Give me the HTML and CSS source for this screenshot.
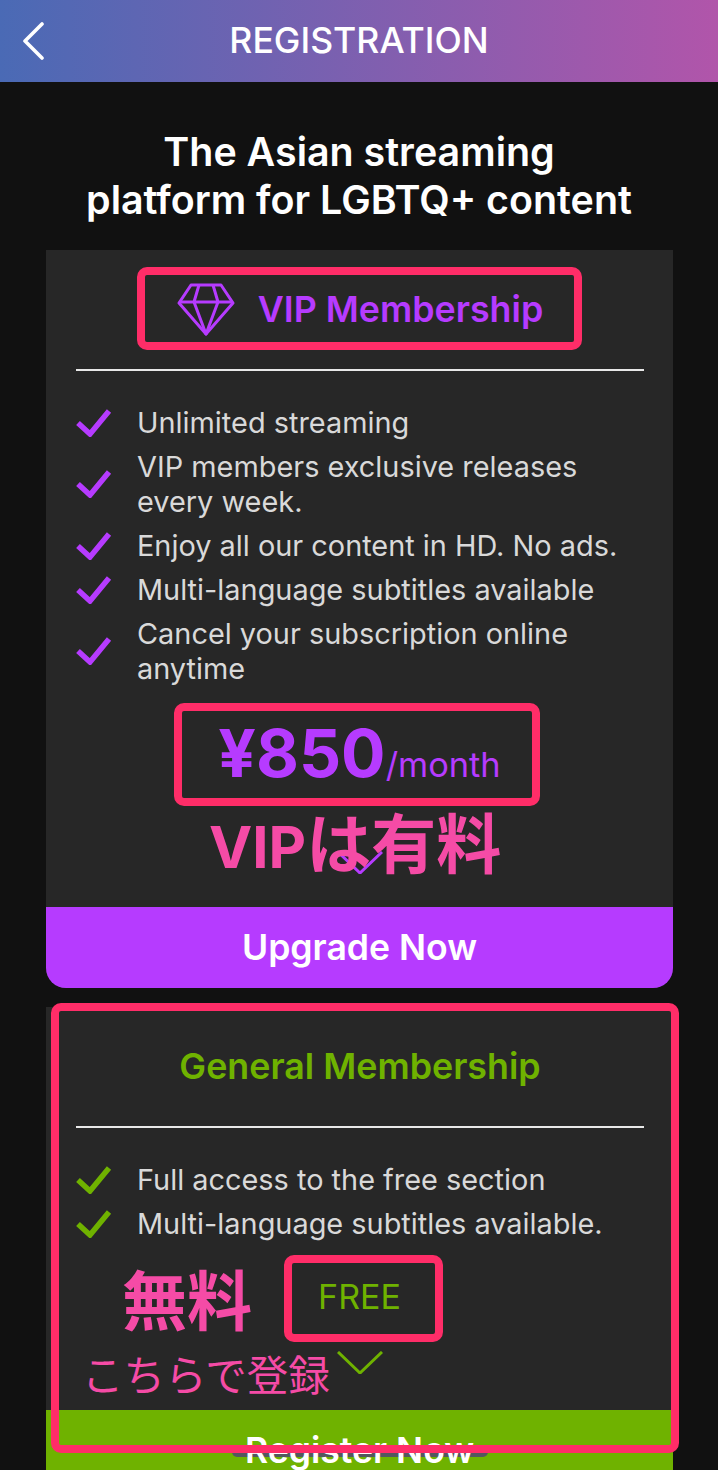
FILE: index.html
```html
<!DOCTYPE html>
<html lang="en">
<head>
<meta charset="utf-8">
<title>Registration</title>
<link rel="stylesheet" href="styles.css">
</head>
<body>
<div class="screen">
  <header class="topbar">
    <svg class="back" viewBox="0 0 22 38" aria-hidden="true"><polyline points="20,2 3,19 20,36"/></svg>
    <h1 class="topbar-title">REGISTRATION</h1>
  </header>
  <h2 class="headline">The Asian streaming<br>platform for LGBTQ+ content</h2>

  <section class="card card-vip">
    <div class="card-head">
      <svg class="diamond" viewBox="0 0 58 53" aria-hidden="true">
        <path d="M14 2H44L56 20L29 51L2 20Z"/>
        <path d="M2 19H56M22 2L17 19L29 51L41 19L36 2"/>
      </svg>
      <h3 class="card-title">VIP Membership</h3>
    </div>
    <ul class="features">
      <li><svg class="check" viewBox="0 0 36 28"><polyline points="2,14 14,25 33,2"/></svg><span>Unlimited streaming</span></li>
      <li><svg class="check" viewBox="0 0 36 28"><polyline points="2,14 14,25 33,2"/></svg><span>VIP members exclusive releases every week.</span></li>
      <li><svg class="check" viewBox="0 0 36 28"><polyline points="2,14 14,25 33,2"/></svg><span>Enjoy all our content in HD. No ads.</span></li>
      <li><svg class="check" viewBox="0 0 36 28"><polyline points="2,14 14,25 33,2"/></svg><span>Multi-language subtitles available</span></li>
      <li><svg class="check" viewBox="0 0 36 28"><polyline points="2,14 14,25 33,2"/></svg><span>Cancel your subscription online anytime</span></li>
    </ul>
    <div class="price"><span class="amount">¥850</span><span class="per">/month</span></div>
    <svg class="chevron" viewBox="0 0 46 23" aria-hidden="true"><polyline points="1,1 23,22 45,1"/></svg>
    <button class="cta"><span class="cta-label">Upgrade Now</span></button>
  </section>

  <section class="card card-general">
    <div class="card-head">
      <h3 class="card-title">General Membership</h3>
    </div>
    <ul class="features">
      <li><svg class="check" viewBox="0 0 36 28"><polyline points="2,14 14,25 33,2"/></svg><span>Full access to the free section</span></li>
      <li><svg class="check" viewBox="0 0 36 28"><polyline points="2,14 14,25 33,2"/></svg><span>Multi-language subtitles available.</span></li>
    </ul>
    <div class="free">FREE</div>
    <svg class="chevron" viewBox="0 0 46 23" aria-hidden="true"><polyline points="1,1 23,22 45,1"/></svg>
    <button class="cta"><span class="cta-label">Register Now</span></button>
  </section>

  <div class="home-bar"></div>

  <div class="mark mark-vip"></div>
  <div class="mark mark-price"></div>
  <div class="mark mark-free"></div>
  <div class="mark mark-general"></div>
  <div class="note note-paid">VIP<span class="note-paid-cjk">は有料</span></div>
  <div class="note note-free">無料</div>
  <div class="note note-here">こちらで登録</div>
</div>
</body>
</html>
```

FILE: styles.css
```css
* { box-sizing: border-box; }
html, body { margin: 0; padding: 0; }
body {
  background: #111111;
  font-family: Inter, "Noto Sans CJK JP", sans-serif;
}
.screen {
  position: relative;
  width: 718px;
  height: 1470px;
  overflow: hidden;
  background: #111111;
}
.topbar {
  position: relative;
  height: 82px;
  display: flex;
  align-items: center;
  justify-content: center;
  background: linear-gradient(90deg, #4a6ab5 0%, #b155aa 100%);
}
.back {
  position: absolute;
  left: 22px;
  top: 22px;
  width: 22px;
  height: 38px;
  fill: none;
  stroke: #fff;
  stroke-width: 3.6;
  stroke-linecap: round;
  stroke-linejoin: round;
}
.topbar-title {
  margin: 0;
  color: #fff;
  font-size: 35.6px;
  font-weight: 500;
  line-height: 1;
}
.headline {
  margin: 0;
  padding-top: 46px;
  height: 168px;
  text-align: center;
  color: #fff;
  font-size: 39.4px;
  font-weight: 600;
  line-height: 48px;
}
.card {
  margin: 0 45px 0 46px;
  background: #272727;
  display: flex;
  flex-direction: column;
  align-items: stretch;
}
.card-vip {
  --accent: #b63bff;
  border-radius: 0 0 20px 20px;
  overflow: hidden;
  height: 738px;
}
.card-general {
  --accent: #6fb200;
  margin-top: 19px;
  height: 520px;
}
.card-head {
  flex: none;
  height: 121px;
  margin: 0 29px 0 30px;
  border-bottom: 2px solid #e8e8e8;
  display: flex;
  align-items: center;
  justify-content: center;
  gap: 23px;
}
.card-title {
  margin: 0;
  color: var(--accent);
  font-size: 35.8px;
  font-weight: 600;
  line-height: 1;
}
.diamond {
  width: 58px;
  height: 53px;
  fill: none;
  stroke: var(--accent);
  stroke-width: 3;
  stroke-linejoin: round;
}
.features {
  flex: none;
  list-style: none;
  margin: 34px 0 0;
  padding: 0 52px 0 30px;
  display: flex;
  flex-direction: column;
  gap: 9px;
  color: #d9d9d9;
  font-size: 28.9px;
  line-height: 35px;
}
.features li {
  display: flex;
  align-items: center;
  gap: 25px;
}
.check {
  flex: none;
  width: 36px;
  height: 28px;
  fill: none;
  stroke: var(--accent);
  stroke-width: 5.5;
}
.price {
  flex: none;
  margin-top: 27px;
  text-align: center;
  color: var(--accent);
  line-height: 80px;
  white-space: nowrap;
}
.amount {
  font-size: 66px;
  font-weight: 700;
}
.per {
  font-size: 34.4px;
  font-weight: 400;
}
.free {
  flex: none;
  margin-top: 34px;
  text-align: center;
  color: var(--accent);
  font-size: 34px;
  line-height: 44px;
}
.chevron {
  flex: none;
  align-self: center;
  width: 46px;
  height: 23px;
  fill: none;
  stroke: var(--accent);
  stroke-width: 3;
}
.card-vip .chevron { margin-top: 40px; }
.card-general .chevron { margin-top: 32px; }
.cta {
  flex: none;
  height: 81px;
  margin-top: 33px;
  border: 0;
  padding: 0;
  background: var(--accent);
  color: #fff;
  font-family: inherit;
  font-size: 35.6px;
  font-weight: 600;
}
.card-general .cta { margin-top: 36px; }
.cta-label {
  position: relative;
  z-index: 2;
}
.home-bar {
  position: absolute;
  left: 232px;
  top: 1447px;
  width: 256px;
  height: 10px;
  border-radius: 5px;
  background: #53585f;
  z-index: 1;
}
.mark {
  position: absolute;
  z-index: 3;
  border: 8px solid #ff2d68;
  border-radius: 10px;
}
.mark-vip { left: 137px; top: 267px; width: 445px; height: 83px; }
.mark-price { left: 174px; top: 703px; width: 366px; height: 103px; }
.mark-free { left: 284px; top: 1255px; width: 159px; height: 87px; }
.mark-general { left: 51px; top: 1003px; width: 628px; height: 450px; }
.note {
  position: absolute;
  z-index: 3;
  color: #f54ba6;
  line-height: 1;
  white-space: nowrap;
  font-family: "Noto Sans CJK JP", Inter, sans-serif;
}
.note-paid { left: 209px; top: 812px; font-size: 58px; font-weight: 700; font-family: Inter, "Noto Sans CJK JP", sans-serif; }
.note-paid-cjk { font-size: 65px; font-weight: 700; }
.note-free { left: 122px; top: 1265px; font-size: 65px; font-weight: 700; }
.note-here { left: 82px; top: 1353px; font-size: 41.5px; font-weight: 400; }
```
